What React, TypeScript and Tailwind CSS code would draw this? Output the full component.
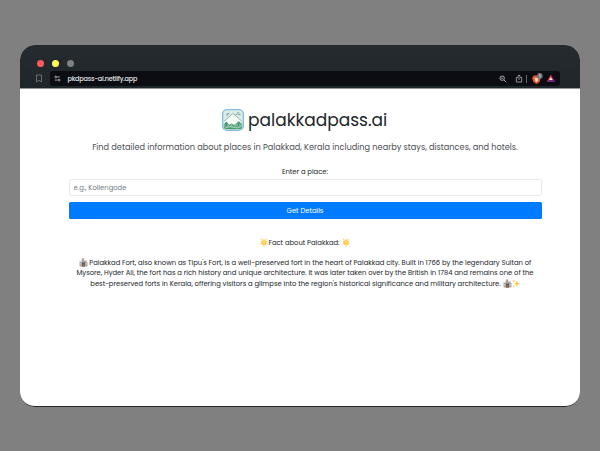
import React from 'react';

function Castle() {
  return (
    <svg viewBox="0 0 18 18" className="-mt-[1px] h-[9px] w-[9px] shrink-0">
      <path d="M1 17V6h2v2h2V4h2V1l4 1-3 1v1h3v2h2V4h2v4h2v9z" fill="#a5a6a8" />
      <path d="M6 17V9h6v8z" fill="#5b5a5e" />
      <path d="M2 10h3v3H2zm11 0h3v3h-3z" fill="#d0c3ae" />
      <path d="M7 17v-4q2-3 4 0v4z" fill="#9e6542" />
      <path d="M7 1l4 1-4 2z" fill="#a74343" />
    </svg>
  );
}

function Star() {
  return (
    <svg viewBox="0 0 16 18" className="h-[9px] w-[8px] shrink-0">
      <path d="M8 1l2.200 4.300 5 .7-3.500 3.500.9 5L8 12.200 3.400 14.500l.9-5L.8 6l5-.7z" fill="#ffc636" />
      <path d="M2.500 1.500l2 3M13.500 1.500l-2 3M1 11.500l3-1.500M15 11.500L12 10M8 12v5.500" stroke="#fbbd3c" strokeWidth="1.700" />
      <circle cx="8" cy="8" r="2.500" fill="#ffdf75" />
    </svg>
  );
}

function Sparkles() {
  return (
    <svg viewBox="0 0 18 18" className="-mt-[1px] h-[9px] w-[8px] shrink-0" fill="#ffc83d">
      <path d="M11 2l2 5.500L18 9.500l-5 2L11 17l-2-5.500-5-2 5-2zM4 0l1 2.500L7.500 3.500 5 4.500 4 7 3 4.500.5 3.500 3 2.500zM4 12l.9 2 2 .9-2 .9L4 18l-.9-2.200-2-.9 2-.9z" />
    </svg>
  );
}

function Logo() {
  return (
    <svg viewBox="0 0 66 66" className="h-[22px] w-[22px] shrink-0">
      <defs>
        <linearGradient id="hill" x1="0" y1="0" x2="0" y2="1">
          <stop offset="0" stopColor="#b5dcc4" />
          <stop offset="1" stopColor="#3b9068" />
        </linearGradient>
      </defs>
      <rect x="2" y="2" width="62" height="62" rx="13" fill="#dceeea" stroke="#86bde0" strokeWidth="4" />
      <path d="M6 37L33 13l27 24v16q0 8-8 8H14q-8 0-8-8z" fill="#f6faf7" />
      <path d="M6 37L33 13l27 24" fill="none" stroke="#83a69b" strokeWidth="2.500" />
      <path d="M5 44q9-5 16 2 9 4 18-1 10-8 22-5v12q0 9-9 9H14q-9 0-9-9z" fill="url(#hill)" />
      <path d="M8 47l5-8 5 8m-5-5v10m9-2l6-5 7 4m9-3l6-8 6 8m-6-4v9" fill="none" stroke="#348561" strokeWidth="3" />
      <path d="M10 56q14-6 25-1t23-3" fill="none" stroke="#d4ebd2" strokeWidth="2" />
      <path d="M15 14h7m-10 4h6m27-6h7m-3 5h7m-15-1h4" stroke="#54877b" strokeWidth="2.500" />
    </svg>
  );
}

function BrowserBar() {
  return (
    <header className="h-[44px] shrink-0 border-b border-[#94979a] bg-gradient-to-b from-[#252b2e] to-[#1f2629] pt-[15px]">
      <div className="flex h-[7px] gap-[8px] pl-[17px]">
        <i className="h-[7px] w-[7px] rounded-full bg-[#ff5c5c]" />
        <i className="h-[7px] w-[7px] rounded-full bg-[#ffff5c]" />
        <i className="h-[7px] w-[7px] rounded-full bg-[#808080]" />
      </div>
      <div className="mt-[4px] flex h-[15px] items-center pl-[15px]">
        <svg viewBox="0 0 8 9" className="mr-[7px] h-[9px] w-[8px]" fill="none" stroke="#788087" strokeWidth=".8">
          <path d="M1.500 1h5v7L4 6.300 1.500 8z" />
        </svg>
        <div className="flex h-[15px] w-[510px] items-center rounded-[3px] bg-[#0c0d12] pl-[4px]">
          <svg viewBox="0 0 8 8" className="h-[7px] w-[7px]" fill="none" stroke="#b9babd" strokeWidth="1">
            <circle cx="2" cy="2.200" r="1" /><path d="M3.500 2.200h3M1 5.800h3" /><circle cx="5.800" cy="5.800" r="1" />
          </svg>
          <span className="ml-[6.500px] text-[6.500px] font-medium leading-[12px] tracking-[-0.220px] text-[#e5e6e8]">pkdpass-ai.netlify.app</span>
          <div className="ml-auto flex items-center pr-[4px]">
            <svg viewBox="0 0 8 8" className="h-[8px] w-[8px]" fill="none" stroke="#b7b9bd" strokeWidth=".9">
              <circle cx="3.200" cy="3.200" r="2.200" /><path d="M5 5l2.300 2.300M2.200 3.200h2" />
            </svg>
            <svg viewBox="0 0 8 9" className="ml-[8px] h-[9px] w-[8px]" fill="none" stroke="#aeb0b4" strokeWidth=".8">
              <path d="M3 3.500H1.300V8h5.400V3.500H5M4 6V1M2.500 2.400L4 .9l1.500 1.500" />
            </svg>
            <i className="ml-[3px] h-[8px] w-px bg-[#606269]" />
            <svg viewBox="0 0 12 12" className="ml-[4px] h-[12px] w-[12px]">
              <path d="M2 3.500l1-1h4l2 1 .5 2-1 3.500L5.500 11 2.500 9 1.300 5.500z" fill="#f05a2b" />
              <path d="M3.800 4.800l1.700.4 1.700-.4.3.7-.9 1.300.2 1.200-1.300 1-1.300-1 .2-1.200-.9-1.300z" fill="#ffe4d8" />
              <circle cx="8.800" cy="3" r="2.900" fill="#6c717b" />
              <path d="M8.200 2l.8-.4v3" fill="none" stroke="#e2e4e8" strokeWidth=".8" />
            </svg>
            <svg viewBox="0 0 10 9" className="ml-[3px] h-[9px] w-[10px]">
              <path d="M5 .5L.7 8 5 5.300z" fill="#ff4724" /><path d="M5 .5L9.300 8 5 5.300z" fill="#9e1f63" /><path d="M.7 8h8.600L5 5.300z" fill="#662d91" /><path d="M5 3.200L3.300 6h3.400z" fill="#fff" />
            </svg>
          </div>
        </div>
      </div>
    </header>
  );
}

export default function App() {
  return (
    <main className="h-[451px] w-[600px] bg-[#808080] px-[20px] pt-[45px] font-['Poppins','Inter',sans-serif]">
      <section className="flex h-[362px] w-[560px] flex-col overflow-hidden rounded-[15px] border-b border-[#25282b] bg-white">
        <BrowserBar />
        <div className="flex flex-col items-center whitespace-nowrap pl-[49px] pr-[39px] pt-[20px]">
          <div className="flex h-[22px] w-[166px] items-center gap-[4px]">
            <Logo />
            <h1 className="text-[17px] leading-[22px] text-[#212529]">palakkadpass.ai</h1>
          </div>
          <p className="mt-[10px] text-[8.200px] leading-[12px] text-[#4e5054]">Find detailed information about places in Palakkad, Kerala including nearby stays, distances, and hotels.</p>
          <label htmlFor="place" className="mt-[13px] text-[6.800px] leading-[11px] text-[#212529]">Enter a place:</label>
          <input id="place" placeholder="e.g., Kollengode" className="mt-[2px] h-[17px] w-[473px] rounded-[2px] border border-[#e8eaed] px-[4px] text-[6.800px] outline-none placeholder:text-[#747b81]" />
          <button className="mt-[6px] h-[17px] w-[473px] rounded-[1.500px] bg-[#007bff] text-[6.800px] leading-[16px] text-white">Get Details</button>
          <div className="mt-[18px] flex h-[11px] items-center text-[6.800px] leading-[11px] text-[#212529]">
            <Star /><span>Fact about Palakkad:</span><span className="w-[2px]" /><Star />
          </div>
          <div className="mt-[10.200px] flex flex-col items-center text-[6.800px] leading-[10.200px] text-[#212529]">
            <div className="flex items-center gap-[1.500px]"><Castle /><span>Palakkad Fort, also known as Tipu's Fort, is a well-preserved fort in the heart of Palakkad city. Built in 1766 by the legendary Sultan of</span></div>
            <div>Mysore, Hyder Ali, the fort has a rich history and unique architecture. It was later taken over by the British in 1784 and remains one of the</div>
            <div className="flex items-center"><span className="mr-[2px]">best-preserved forts in Kerala, offering visitors a glimpse into the region's historical significance and military architecture.</span><Castle /><Sparkles /></div>
          </div>
        </div>
      </section>
    </main>
  );
}
